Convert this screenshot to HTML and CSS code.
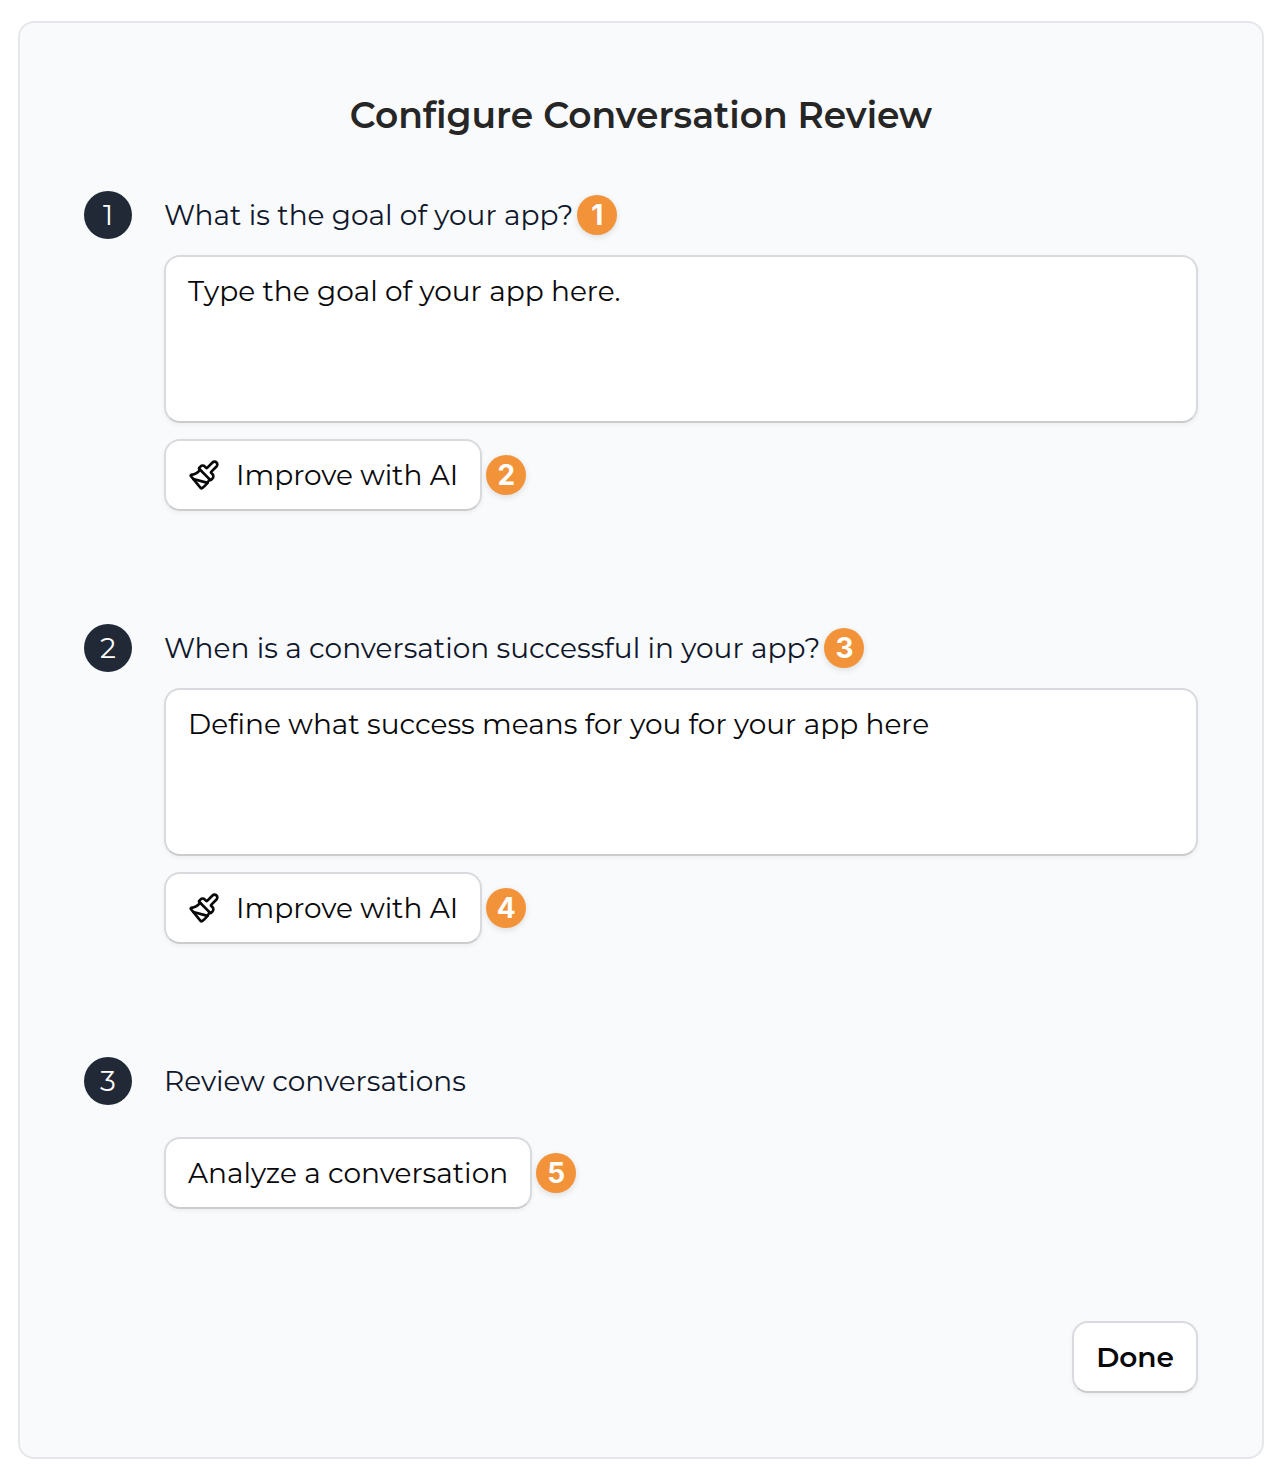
FILE: index.html
```html
<!DOCTYPE html>
<html lang="en">
<head>
<meta charset="utf-8">
<meta name="viewport" content="width=device-width, initial-scale=1">
<title>Configure Conversation Review</title>
<link rel="stylesheet" href="styles.css">
</head>
<body>
<svg class="sprite" aria-hidden="true">
  <symbol id="paintbrush" viewBox="0 0 24 24">
    <path d="m14.622 17.897-10.68-2.913"/>
    <path d="M18.376 2.622a1 1 0 1 1 3.002 3.002L17.36 9.643a.5.5 0 0 0 0 .707l.944.944a2.41 2.41 0 0 1 0 3.408l-.944.944a.5.5 0 0 1-.707 0L8.354 7.348a.5.5 0 0 1 0-.707l.944-.944a2.41 2.41 0 0 1 3.408 0l.944.944a.5.5 0 0 0 .707 0z"/>
    <path d="M9 8c-1.804 2.71-3.97 3.46-6.583 3.948a.507.507 0 0 0-.302.819l7.32 8.883a1 1 0 0 0 1.185.204C12.735 20.405 16 16.792 16 15"/>
  </symbol>
</svg>
<main class="card">
  <h1 class="title">Configure Conversation Review</h1>
  <form class="steps">
    <section class="step">
      <span class="number">1</span>
      <div class="body">
        <div class="row heading"><label class="question" for="goal">What is the goal of your app?</label><span class="badge">1</span></div>
        <textarea class="field" id="goal">Type the goal of your app here.</textarea>
        <div class="row"><button class="button improve" type="button"><svg class="icon" aria-hidden="true"><use href="#paintbrush"/></svg>Improve with AI</button><span class="badge">2</span></div>
      </div>
    </section>
    <section class="step">
      <span class="number">2</span>
      <div class="body">
        <div class="row heading"><label class="question" for="success">When is a conversation successful in your app?</label><span class="badge">3</span></div>
        <textarea class="field" id="success">Define what success means for you for your app here</textarea>
        <div class="row"><button class="button improve" type="button"><svg class="icon" aria-hidden="true"><use href="#paintbrush"/></svg>Improve with AI</button><span class="badge">4</span></div>
      </div>
    </section>
    <section class="step">
      <span class="number">3</span>
      <div class="body review">
        <div class="row heading"><h2 class="question">Review conversations</h2></div>
        <div class="row"><button class="button" type="button">Analyze a conversation</button><span class="badge">5</span></div>
      </div>
    </section>
    <div class="footer"><button class="button done" type="submit">Done</button></div>
  </form>
</main>
</body>
</html>
```
FILE: styles.css
```css
* { box-sizing: border-box; }
body {
  margin: 0;
  padding: 21px 18px 16px;
  background: #fff;
  color: #09090b;
  font: 400 28px/40px Montserrat, Inter, sans-serif;
}
.sprite { display: none; }
.card {
  padding: 64px;
  background: #f9fafc;
  border: 2px solid #e5e7eb;
  border-radius: 16px;
}
.title {
  margin: 0 0 52px;
  padding-top: 4px;
  color: #262626;
  font-size: 36px;
  line-height: 48px;
  font-weight: 600;
  text-align: center;
}
.steps { display: flex; flex-direction: column; }
.step { display: flex; gap: 32px; }
.step + .step { margin-top: 113px; }
.number {
  flex: none;
  width: 48px;
  height: 48px;
  border-radius: 50%;
  background: #212936;
  color: #fff;
  line-height: 48px;
  text-align: center;
}
.body { flex: 1; min-width: 0; display: flex; flex-direction: column; gap: 16px; }
.review { gap: 32px; }
.row { display: flex; align-items: center; gap: 4px; }
.heading { min-height: 48px; }
.question { margin: 0; color: #0f172a; font-size: 28px; font-weight: 400; }
.field, .button {
  background: #fff;
  border: 2px solid #d9dadd;
  border-bottom-color: #cbccce;
  border-radius: 16px;
  box-shadow: 0 2px 4px rgb(0 0 0 / 5%);
  color: #09090b;
  font: inherit;
}
.field { display: block; width: 100%; height: 168px; padding: 14px 22px; resize: none; }
.button {
  display: flex;
  align-items: center;
  gap: 16px;
  height: 72px;
  padding: 0 22px;
  white-space: nowrap;
}
.icon { width: 32px; height: 32px; fill: none; stroke: currentColor; stroke-width: 2; stroke-linecap: round; stroke-linejoin: round; }
.badge {
  flex: none;
  width: 40px;
  height: 40px;
  border-radius: 50%;
  background: #f29339;
  box-shadow: 0 2px 6px rgb(0 0 0 / 12%);
  color: #fff;
  font: 700 28px/40px Inter, sans-serif;
  text-align: center;
}
.footer { display: flex; justify-content: flex-end; margin-top: 112px; }
.button.done { font-weight: 600; }
```
